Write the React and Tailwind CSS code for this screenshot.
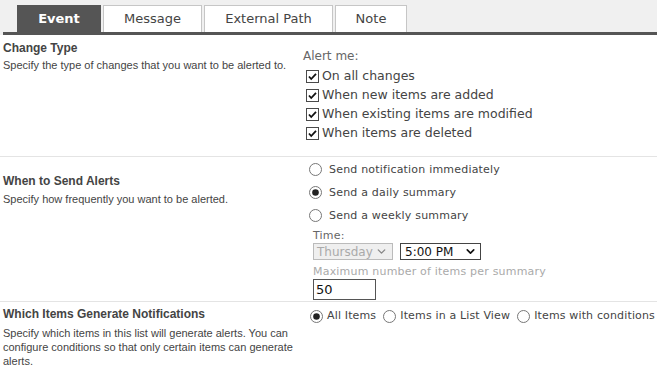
import { ChevronDown } from "lucide-react";

const leftFont = { fontFamily: '"Liberation Sans", Arial, sans-serif' };
const rightFont = { fontFamily: '"DejaVu Sans", Verdana, sans-serif' };

function Check() {
  return (
    <svg width="13" height="13" viewBox="0 0 13 13" className="shrink-0">
      <rect x="0.5" y="0.5" width="12" height="12" fill="#fff" stroke="#4a4a4a" />
      <path d="M3 6.5 L5.2 9 L10 3.8" fill="none" stroke="#111" strokeWidth="1.8" />
    </svg>
  );
}

function Radio({ on }) {
  return (
    <svg width="13" height="13" viewBox="0 0 13 13" className="shrink-0">
      <circle cx="6.5" cy="6.5" r="6" fill="#fff" stroke="#777" />
      {on && <circle cx="6.5" cy="6.5" r="3.3" fill="#222" />}
    </svg>
  );
}

function Tab({ label, active, w }) {
  return (
    <div
      className={`h-[27px] flex items-center justify-center text-[13px] ${
        active
          ? "bg-[#555] text-white font-bold"
          : "bg-white text-[#444] border border-b-0 border-[#c6c6c6]"
      } ${w}`}
      style={rightFont}
    >
      {label}
    </div>
  );
}

function Section({ title, children, desc, className }) {
  return (
    <div className={`flex border-b border-[#e4e4e4] ${className}`}>
      <div className="w-[303px] shrink-0 pl-[3px] text-[#444]" style={leftFont}>
        {title}
        {desc}
      </div>
      <div className="flex-1">{children}</div>
    </div>
  );
}

export default function App() {
  return (
    <div className="w-[657px] h-[365px] bg-white overflow-hidden">
      <div className="bg-[#f0f0f0] pt-[5px] pl-[3px]">
        <div className="flex gap-[2px] pl-[14px] border-b-[3px] border-[#555]">
          <Tab label="Event" active w="w-[84px]" />
          <Tab label="Message" w="w-[99px]" />
          <Tab label="External Path" w="w-[129px]" />
          <Tab label="Note" w="w-[72px]" />
        </div>
      </div>

      <Section
        className="h-[122px]"
        title={<div className="pt-[6px] text-[12px] font-bold leading-[15px]">Change Type</div>}
        desc={<div className="mt-[2px] text-[11px] leading-[14px] whitespace-nowrap">Specify the type of changes that you want to be alerted to.</div>}
      >
        <div className="pt-[14px] text-[#444]" style={rightFont}>
          <div className="text-[12px] text-[#666] leading-[15px]">Alert me:</div>
          <div className="mt-[4px] flex flex-col gap-[3px] pl-[3px] text-[12.5px] leading-[16px]">
            {["On all changes", "When new items are added", "When existing items are modified", "When items are deleted"].map((t) => (
              <div key={t} className="flex items-center gap-[3px]">
                <Check />
                <span>{t}</span>
              </div>
            ))}
          </div>
        </div>
      </Section>

      <Section
        className="h-[145px]"
        title={<div className="pt-[17px] text-[12px] font-bold leading-[15px]">When to Send Alerts</div>}
        desc={<div className="mt-[3px] text-[11px] leading-[14px]">Specify how frequently you want to be alerted.</div>}
      >
        <div className="pt-[5px] text-[#444]" style={rightFont}>
          <div className="flex flex-col gap-[8px] pl-[6px] text-[11px] leading-[15px] tracking-[0.2px]">
            {[
              ["Send notification immediately", false],
              ["Send a daily summary", true],
              ["Send a weekly summary", false],
            ].map(([t, on]) => (
              <div key={t} className="flex items-center gap-[7px]">
                <Radio on={on} />
                <span>{t}</span>
              </div>
            ))}
          </div>
          <div className="pl-[10px] mt-[6px]">
            <div className="text-[11px] leading-[14px] text-[#666] tracking-[0.2px]">Time:</div>
            <div className="flex gap-[7px]">
              <div className="w-[80px] h-[17px] border border-[#bbb] bg-[#efefef] text-[#aaa] text-[12px] flex items-center justify-between pl-[3px] pr-[4px]">
                <span>Thursday</span>
                <ChevronDown size={13} strokeWidth={2.5} color="#888" />
              </div>
              <div className="w-[81px] h-[17px] border border-[#444] bg-white text-[#111] text-[12px] flex items-center justify-between pl-[4px] pr-[3px]">
                <span>5:00 PM</span>
                <ChevronDown size={13} strokeWidth={3} color="#111" />
              </div>
            </div>
            <div className="mt-[5px] text-[11px] leading-[14px] text-[#aaa] tracking-[0.2px]">Maximum number of items per summary</div>
            <div className="w-[63px] h-[21px] border border-[#555] text-[13px] text-[#111] pl-[2px] leading-[19px]">50</div>
          </div>
        </div>
      </Section>

      <div className="flex">
        <div className="w-[303px] shrink-0 pl-[3px] text-[#444]" style={leftFont}>
          <div className="pt-[5px] text-[12px] font-bold leading-[15px]">Which Items Generate Notifications</div>
          <div className="mt-[4px] text-[11px] leading-[14px] pr-[4px]">
            Specify which items in this list will generate alerts. You can configure conditions so that only certain items can generate alerts.
          </div>
        </div>
        <div className="flex items-center whitespace-nowrap pt-[6px] h-[22px] pl-[7px] text-[11px] tracking-[0.15px] text-[#444]" style={rightFont}>
          <Radio on />
          <span className="ml-[4px] mr-[7px]">All Items</span>
          <Radio />
          <span className="ml-[4px] mr-[7px]">Items in a List View</span>
          <Radio />
          <span className="ml-[4px]">Items with conditions</span>
        </div>
      </div>
    </div>
  );
}
